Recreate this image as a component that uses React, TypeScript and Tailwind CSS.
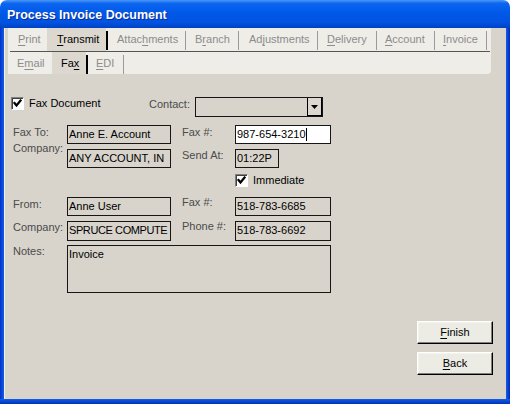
import React from "react";

function U({ text, i }: { text: string; i: number }) {
  return (
    <>
      {text.slice(0, i)}
      <span className="underline decoration-1 underline-offset-[2px]">{text[i]}</span>
      {text.slice(i + 1)}
    </>
  );
}

type Tab = { label: string; u: number; w: number; pl: number; sel?: boolean; sep: "none" | "gray" | "black" };

const row1: Tab[] = [
  { label: "Print", u: 0, w: 39, pl: 10, sep: "none" },
  { label: "Transmit", u: 0, w: 59, pl: 10, sel: true, sep: "black" },
  { label: "Attachments", u: 5, w: 77, pl: 9, sep: "gray" },
  { label: "Branch", u: 1, w: 52, pl: 9, sep: "gray" },
  { label: "Adjustments", u: 2, w: 78, pl: 10, sep: "gray" },
  { label: "Delivery", u: 0, w: 58, pl: 9, sep: "gray" },
  { label: "Account", u: 0, w: 57, pl: 8, sep: "gray" },
  { label: "Invoice", u: 0, w: 51, pl: 8, sep: "gray" },
];

const row2: Tab[] = [
  { label: "Email", u: 1, w: 44, pl: 9, sep: "none" },
  { label: "Fax", u: 2, w: 34, pl: 9, sel: true, sep: "black" },
  { label: "EDI", u: 0, w: 35, pl: 8, sep: "gray" },
];

function TabRow({ tabs, h, sepTop, sepBottom }: { tabs: Tab[]; h: string; sepTop: string; sepBottom: string }) {
  return (
    <div className={`flex ${h}`}>
      {tabs.map((t) => (
        <div key={t.label} className="flex h-full">
          <div
            className={`flex h-full items-center ${t.sel ? "bg-[#dcd8d0] text-black" : "text-[#8c8c8c]"}`}
            style={{ width: t.w, paddingLeft: t.pl }}
          >
            <span className="leading-[13px] whitespace-nowrap">
              <U text={t.label} i={t.u} />
            </span>
          </div>
          {t.sep === "black" && <div className={`w-[2px] bg-black ${sepTop} ${sepBottom}`} />}
          {t.sep === "gray" && <div className={`w-[1px] bg-[#9a9a9a] ${sepTop} ${sepBottom}`} />}
        </div>
      ))}
    </div>
  );
}

function Check({ cls = "" }: { cls?: string }) {
  return (
    <div className={`w-[13px] h-[13px] shrink-0 bg-white border border-t-[#808080] border-l-[#808080] border-b-white border-r-white shadow-[inset_1px_1px_0_#404040] flex items-center justify-center ${cls}`}>
      <svg width="9" height="9" viewBox="0 0 9 9">
        <polyline points="1.5,4 3.5,6.5 7.5,1.5" fill="none" stroke="#000" strokeWidth="2.2" strokeLinecap="square" />
      </svg>
    </div>
  );
}

function Box({ text, w, h, white, caret, cls = "", tcls = "" }: { text: string; w: string; h: string; white?: boolean; caret?: boolean; cls?: string; tcls?: string }) {
  return (
    <div
      className={`${w} ${h} shrink-0 border border-[#161616] ${white ? "bg-white" : "bg-[#d8d4cc]"} overflow-hidden whitespace-nowrap pl-[1px] pt-[2px] leading-[13px] text-black flex items-start ${cls}`}
    >
      <span className={tcls}>{text}</span>
      {caret && <span className="inline-block w-[1px] h-[13px] bg-black" />}
    </div>
  );
}

function Label({ children, cls = "" }: { children: React.ReactNode; cls?: string }) {
  return <div className={`leading-[13px] text-[#4b4b4b] whitespace-nowrap ${cls}`}>{children}</div>;
}

function Button({ label, u, cls = "" }: { label: string; u: number; cls?: string }) {
  return (
    <div
      className={`w-[76px] h-[23px] bg-[#ecebe4] border border-t-white border-l-white border-r-black border-b-black shadow-[inset_-1px_-1px_0_#808080,inset_1px_1px_0_#f4f3ee] flex items-center justify-center text-black leading-[13px] ${cls}`}
    >
      <span>
        <U text={label} i={u} />
      </span>
    </div>
  );
}

export default function App() {
  return (
    <div className="w-[510px] h-[404px] bg-white flex flex-col font-['Liberation_Sans',Arial,sans-serif] text-[11px]">
      <div className="h-[28px] shrink-0 rounded-t-[7px] bg-[linear-gradient(to_bottom,#4a98f7_0%,#0d66f0_12%,#0058e8_45%,#0253e0_80%,#0040c4_100%)] flex items-start pl-[7px] pt-[8px]">
        <span className="text-white font-bold text-[12.5px] leading-[14px] [text-shadow:1px_1px_0_#0b2a94]">
          Process Invoice Document
        </span>
      </div>
      <div className="flex h-[371px]">
        <div className="w-[4px] bg-[linear-gradient(to_right,#0630c8,#0f5fe8)]" />
        <div className="w-[502px] bg-[#d8d4cc] flex flex-col border-l border-[#f2efe6]">
          {/* tab strip */}
          <div className="ml-[3px] w-[483px] h-[46px] bg-[#efede7] rounded-br-[4px] flex flex-col">
            <TabRow tabs={row1} h="h-[23px]" sepTop="mt-[3px]" sepBottom="mb-[1px]" />
            <div className="ml-[2px] w-[480px] h-[1px] bg-[#555555]" />
            <TabRow tabs={row2} h="h-[22px]" sepTop="mt-[3px]" sepBottom="mb-[0px]" />
          </div>

          {/* row A */}
          <div className="mt-[22px] flex h-[21px] items-start">
            <div className="ml-[6px] w-[138px] flex items-start">
              <Check cls="mt-[1px]" />
              <span className="ml-[5px] mt-[1px] leading-[13px] text-black">Fax Document</span>
            </div>
            <Label cls="w-[46px] mt-[2px]">Contact:</Label>
            <div className="mt-[1px] w-[128px] h-[20px] border border-[#161616] bg-[#d8d4cc] flex justify-end">
              <div className="w-[15px] h-full border-l border-black border-r border-b bg-[#dcd8d0] flex items-center justify-center">
                <svg width="7" height="4" viewBox="0 0 7 4">
                  <polygon points="0,0 7,0 3.5,4" fill="#000" />
                </svg>
              </div>
            </div>
          </div>

          {/* fax to section */}
          <div className="mt-[8px] ml-[8px] flex">
            <div className="w-[54px] flex flex-col text-[#4b4b4b] leading-[16px] mt-[-1px]">
              <span>Fax To:</span>
              <span>Company:</span>
            </div>
            <div className="w-[104px] flex flex-col gap-[5px]">
              <Box text="Anne E. Account" w="w-[104px]" h="h-[19px]" />
              <Box text="ANY ACCOUNT, IN" w="w-[104px]" h="h-[19px]" />
            </div>
            <div className="w-[64px] pl-[11px] flex flex-col">
              <Label cls="mt-[1px]">Fax #:</Label>
              <Label cls="mt-[10px]">Send At:</Label>
            </div>
            <div className="flex flex-col">
              <Box text="987-654-3210" w="w-[96px]" h="h-[19px]" white caret />
              <Box text="01:22P" w="w-[44px]" h="h-[19px]" cls="mt-[5px]" />
              <div className="mt-[6px] flex items-center h-[13px]">
                <Check />
                <span className="ml-[5px] leading-[13px] text-black">Immediate</span>
              </div>
            </div>
          </div>

          {/* from section */}
          <div className="mt-[10px] ml-[8px] flex">
            <div className="w-[54px] flex flex-col">
              <Label cls="mt-[1px]">From:</Label>
              <Label cls="mt-[10px]">Company:</Label>
              <Label cls="mt-[11px]">Notes:</Label>
            </div>
            <div className="flex flex-col">
              <div className="flex">
                <Box text="Anne User" w="w-[104px]" h="h-[19px]" />
                <Label cls="w-[64px] pl-[11px] mt-[-1px]">Fax #:</Label>
                <Box text="518-783-6685" w="w-[96px]" h="h-[19px]" />
              </div>
              <div className="flex mt-[5px]">
                <Box text="SPRUCE COMPUTE" w="w-[104px]" h="h-[20px]" tcls="tracking-[-0.4px]" />
                <Label cls="w-[64px] pl-[11px] mt-[-1px]">Phone #:</Label>
                <Box text="518-783-6692" w="w-[96px]" h="h-[20px]" />
              </div>
              <Box text="Invoice" w="w-[264px]" h="h-[48px]" cls="mt-[4px]" />
            </div>
          </div>

          {/* buttons */}
          <div className="mt-[28px] ml-[412px] flex flex-col gap-[8px]">
            <Button label="Finish" u={0} />
            <Button label="Back" u={0} />
          </div>
        </div>
        <div className="w-[4px] bg-[linear-gradient(to_left,#0526b8,#0f5fe8)]" />
      </div>
      <div className="h-[5px] bg-[linear-gradient(to_bottom,#0f5fe8,#0430b8)]" />
    </div>
  );
}
